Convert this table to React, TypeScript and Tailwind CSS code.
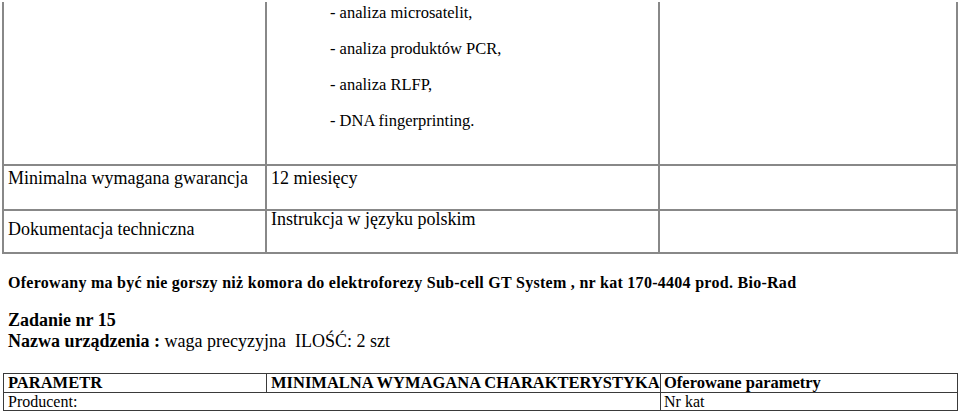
import React from "react";

const items = [
  "- analiza microsatelit,",
  "- analiza produktów PCR,",
  "- analiza RLFP,",
  "- DNA fingerprinting.",
];

export default function App() {
  return (
    <div className="w-[960px] h-[411px] overflow-hidden bg-white text-black font-['Liberation_Serif','Times_New_Roman',serif]">
      {/* Upper table */}
      <div className="mt-[2px] ml-[2px] w-[956px] grid grid-cols-[261px_391px_296px] gap-[2px] bg-[#888] px-[2px] pb-[2px]">
        <div className="bg-white h-[162px]" />
        <div className="bg-white h-[162px] overflow-hidden pl-[63px]">
          <div className="-mt-[7px] text-[16.5px]">
            {items.map((item) => (
              <div key={item} className="h-[36px] leading-[36px]">
                {item}
              </div>
            ))}
          </div>
        </div>
        <div className="bg-white h-[162px]" />

        <div className="bg-white h-[43px] pl-[4px] pt-[2px] text-[18px] leading-[20px] whitespace-nowrap">
          Minimalna wymagana gwarancja
        </div>
        <div className="bg-white h-[43px] pl-[4px] pt-[2px] text-[18px] leading-[20px]">
          12 miesięcy
        </div>
        <div className="bg-white h-[43px]" />

        <div className="bg-white h-[41px] pl-[4px] pt-[8px] text-[18px] leading-[20px]">
          Dokumentacja techniczna
        </div>
        <div className="bg-white h-[41px] pl-[4px] pt-0 text-[18px] leading-[16px]">
          Instrukcja w języku polskim
        </div>
        <div className="bg-white h-[41px]" />
      </div>

      {/* Note */}
      <p className="mt-[20px] pl-[8px] text-[16px] leading-[18px] font-bold tracking-[0.28px] whitespace-nowrap">
        Oferowany ma być nie gorszy niż komora do elektroforezy Sub-cell GT System , nr kat 170-4404 prod. Bio-Rad
      </p>

      {/* Task heading */}
      <div className="mt-[18px] pl-[8px] text-[18px] leading-[21px]">
        <div className="font-bold">Zadanie nr 15</div>
        <div>
          <span className="font-bold">Nazwa urządzenia :</span> waga precyzyjna&nbsp; ILOŚĆ: 2 szt
        </div>
      </div>

      {/* Lower table */}
      <div className="mt-[21px] ml-[3px] w-[955px] grid grid-cols-[262px_393px_296px] gap-px bg-[#3a3a3a] p-px leading-[18px]">
        <div className="bg-white h-[18px] pl-[4px] text-[16.5px] font-bold">PARAMETR</div>
        <div className="bg-white h-[18px] pl-[4px] text-[16.5px] font-bold whitespace-nowrap">
          MINIMALNA WYMAGANA CHARAKTERYSTYKA
        </div>
        <div className="bg-white h-[18px] pl-[3px] text-[16.5px] font-bold">Oferowane parametry</div>

        <div className="bg-white h-[17px] pl-[4px] col-span-2 text-[16px] leading-[17px]">Producent:</div>
        <div className="bg-white h-[17px] pl-[3px] text-[16px] leading-[17px]">Nr kat</div>
      </div>
    </div>
  );
}
